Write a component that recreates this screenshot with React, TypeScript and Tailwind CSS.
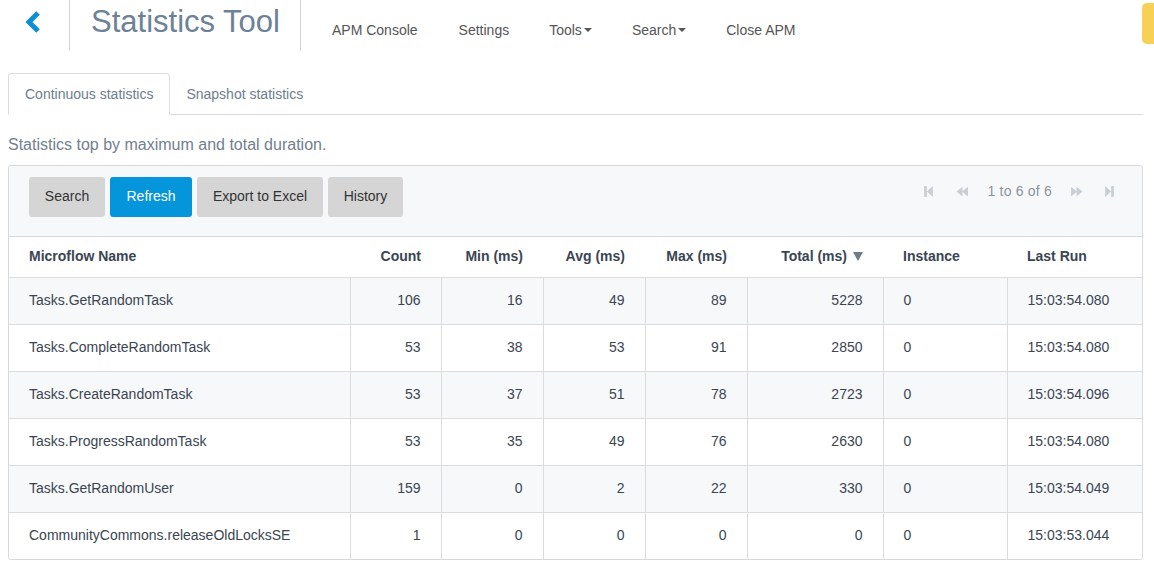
import React from "react";

const rows = [
    { name: "Tasks.GetRandomTask", count: 106, min: 16, avg: 49, max: 89, total: 5228, inst: 0, last: "15:03:54.080" },
    { name: "Tasks.CompleteRandomTask", count: 53, min: 38, avg: 53, max: 91, total: 2850, inst: 0, last: "15:03:54.080" },
    { name: "Tasks.CreateRandomTask", count: 53, min: 37, avg: 51, max: 78, total: 2723, inst: 0, last: "15:03:54.096" },
    { name: "Tasks.ProgressRandomTask", count: 53, min: 35, avg: 49, max: 76, total: 2630, inst: 0, last: "15:03:54.080" },
    { name: "Tasks.GetRandomUser", count: 159, min: 0, avg: 2, max: 22, total: 330, inst: 0, last: "15:03:54.049" },
    { name: "CommunityCommons.releaseOldLocksSE", count: 1, min: 0, avg: 0, max: 0, total: 0, inst: 0, last: "15:03:53.044" },
];

function Caret() {
    return <span className="inline-block ml-0.5 align-middle border-x-[4px] border-x-transparent border-t-[4px] border-t-[#555] mb-[2px]" />;
}

function PagerIcon({ kind }: { kind: "first" | "prev" | "next" | "last" }) {
    const flip = kind === "next" || kind === "last";
    return (
        <svg width="13" height="13" viewBox="0 0 12 12" className={flip ? "-scale-x-100" : ""} fill="#c9ced4">
            {kind === "first" || kind === "last" ? (
                <>
                    <rect x="2" y="1" width="2.5" height="10" />
                    <path d="M4.5 6 L10 1 V11 Z" />
                </>
            ) : (
                <>
                    <path d="M0.5 6 L6 1.5 V10.5 Z" />
                    <path d="M5.5 6 L11 1.5 V10.5 Z" />
                </>
            )}
        </svg>
    );
}

export default function App() {
    const num = "px-5 text-right border-l border-[#dcdcdc]";
    return (
        <div className="w-[1154px] h-[567px] bg-white overflow-hidden text-[14px] text-[#3b4552]" style={{ fontFamily: '"Liberation Sans", Arial, sans-serif' }}>
            {/* header */}
            <div className="flex items-start h-[51px]">
                <div className="w-[70px] h-[51px] flex justify-center pt-[10px] border-r border-[#d4d4d4]">
                    <svg width="20" height="24" viewBox="0 0 20 24" className="-ml-[4px]">
                        <path d="M15 3 L6 12 L15 21" stroke="#0b8fd6" strokeWidth="5" fill="none" strokeLinejoin="miter" />
                    </svg>
                </div>
                <div className="w-[231px] h-[51px] border-r border-[#d4d4d4] pl-[21px] pt-[2px] text-[31px] text-[#6d8197] leading-[40px]">
                    Statistics Tool
                </div>
                <nav className="flex items-center h-[60px] pl-[10px] text-[#555]">
                    <span className="px-[21px]">APM Console</span>
                    <span className="px-[20px]">Settings</span>
                    <span className="px-[20px]">Tools<Caret /></span>
                    <span className="px-[20px]">Search<Caret /></span>
                    <span className="px-[20px]">Close APM</span>
                </nav>
                <div className="ml-auto mt-[3px] w-[12px] h-[41px] bg-[#f6d155] rounded-l-[5px]" />
            </div>

            <div className="px-[8px] pt-[22px] pr-[11px]">
                {/* tabs */}
                <div className="flex border-b border-[#dddddd] h-[42px]">
                    <div className="px-[16px] h-[42px] border border-[#dddddd] border-b-white rounded-t-[4px] bg-white flex items-center text-[#6d7d8e]">
                        Continuous statistics
                    </div>
                    <div className="px-[16px] h-[42px] flex items-center text-[#6d7d8e]">Snapshot statistics</div>
                </div>

                <p className="text-[16px] text-[#71808f] mt-[20px] leading-[20px]">Statistics top by maximum and total duration.</p>

                <div className="mt-[10px] border border-[#d9d9d9] rounded-[3px] overflow-hidden">
                    <div className="flex items-center justify-between bg-[#f7f8fa] h-[71px] pl-[20px] pr-[26px] border-b border-[#d9d9d9]">
                        <div className="flex gap-[5px] -mt-[9px]">
                            <button className="h-[40px] w-[76px] rounded-[3px] bg-[#d5d5d5] text-[#333]">Search</button>
                            <button className="h-[40px] w-[82px] rounded-[3px] bg-[#0595db] text-white">Refresh</button>
                            <button className="h-[40px] w-[126px] rounded-[3px] bg-[#d5d5d5] text-[#333]">Export to Excel</button>
                            <button className="h-[40px] w-[75px] rounded-[3px] bg-[#d5d5d5] text-[#333]">History</button>
                        </div>
                        <div className="flex items-center text-[#8a949f] -mt-[19px]">
                            <PagerIcon kind="first" />
                            <span className="ml-[21px]"><PagerIcon kind="prev" /></span>
                            <span className="ml-[19px] tracking-[0.2px]">1 to 6 of 6</span>
                            <span className="ml-[18px]"><PagerIcon kind="next" /></span>
                            <span className="ml-[20px]"><PagerIcon kind="last" /></span>
                        </div>
                    </div>
                    <table className="w-full border-collapse">
                        <colgroup>
                            <col className="w-[341px]" />
                            <col className="w-[91px]" />
                            <col className="w-[102px]" />
                            <col className="w-[102px]" />
                            <col className="w-[102px]" />
                            <col className="w-[136px]" />
                            <col className="w-[124px]" />
                            <col />
                        </colgroup>
                        <thead>
                            <tr className="h-[40px] font-bold text-[#3a4553]">
                                <th className="px-5 text-left">Microflow Name</th>
                                <th className="px-5 text-right">Count</th>
                                <th className="px-5 text-right">Min (ms)</th>
                                <th className="px-5 text-right">Avg (ms)</th>
                                <th className="px-5 text-right">Max (ms)</th>
                                <th className="px-5 text-right">
                                    Total (ms)
                                    <span className="inline-block ml-[6px] align-middle mb-[3px] border-x-[5px] border-x-transparent border-t-[9px] border-t-[#6e7b8a]" />
                                </th>
                                <th className="px-5 text-left">Instance</th>
                                <th className="px-5 text-left">Last Run</th>
                            </tr>
                        </thead>
                        <tbody>
                            {rows.map((r, i) => (
                                <tr key={r.name} className={`h-[47px] border-t border-[#dcdcdc] ${i % 2 === 0 ? "bg-[#f7f8fa]" : "bg-white"}`}>
                                    <td className="px-5">{r.name}</td>
                                    <td className={num}>{r.count}</td>
                                    <td className={num}>{r.min}</td>
                                    <td className={num}>{r.avg}</td>
                                    <td className={num}>{r.max}</td>
                                    <td className={num}>{r.total}</td>
                                    <td className="px-5 border-l border-[#dcdcdc]">{r.inst}</td>
                                    <td className="px-5 border-l border-[#dcdcdc]">{r.last}</td>
                                </tr>
                            ))}
                        </tbody>
                    </table>
                </div>
            </div>
        </div>
    );
}
